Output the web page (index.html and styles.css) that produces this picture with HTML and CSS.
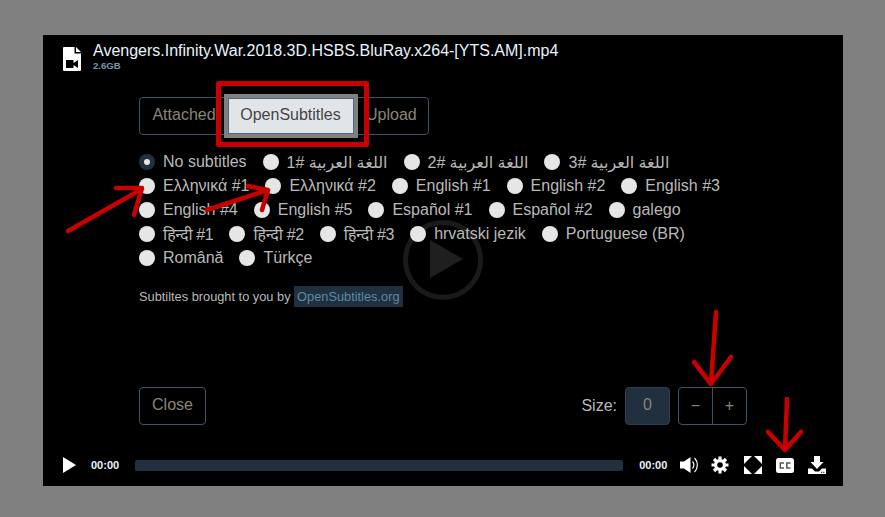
FILE: index.html
```html
<!DOCTYPE html>
<html lang="en">
<head>
  <meta charset="UTF-8" />
  <meta name="viewport" content="width=device-width, initial-scale=1.0" />
  <title>Subtitles</title>
  <link rel="stylesheet" href="styles.css">
</head>
<body>
  <div class="player">
    <div class="file-head">
      <svg class="file-icon" viewBox="0 0 18 24" width="18" height="24">
        <path fill="#fff" fill-rule="evenodd" d="M1 0h10.500v6.500H18V23a1 1 0 0 1-1 1H1a1 1 0 0 1-1-1V1a1 1 0 0 1 1-1zM13 0l5 5h-5zM3 13v8h7.500v-3l4.500 3v-8l-4.500 3v-3z"/>
      </svg>
      <div>
        <div class="file-name">Avengers.Infinity.War.2018.3D.HSBS.BluRay.x264-[YTS.AM].mp4</div>
        <div class="file-size">2.6GB</div>
      </div>
    </div>

    <div class="panel">
      <div class="tabs">
        <button class="tab">Attached</button>
        <button class="tab active">OpenSubtitles</button>
        <button class="tab">Upload</button>
      </div>

      <div class="subs">
        <label class="sub"><span class="radio checked"></span>No subtitles</label>
        <label class="sub"><span class="radio"></span><span class="ar" dir="rtl">اللغة العربية #1</span></label>
        <label class="sub"><span class="radio"></span><span class="ar" dir="rtl">اللغة العربية #2</span></label>
        <label class="sub"><span class="radio"></span><span class="ar" dir="rtl">اللغة العربية #3</span></label>
        <label class="sub"><span class="radio"></span>Ελληνικά #1</label>
        <label class="sub"><span class="radio"></span>Ελληνικά #2</label>
        <label class="sub"><span class="radio"></span>English #1</label>
        <label class="sub"><span class="radio"></span>English #2</label>
        <label class="sub"><span class="radio"></span>English #3</label>
        <label class="sub"><span class="radio"></span>English #4</label>
        <label class="sub"><span class="radio"></span>English #5</label>
        <label class="sub"><span class="radio"></span>Español #1</label>
        <label class="sub"><span class="radio"></span>Español #2</label>
        <label class="sub"><span class="radio"></span>galego</label>
        <label class="sub"><span class="radio"></span><span class="hi">हिन्दी #1</span></label>
        <label class="sub"><span class="radio"></span><span class="hi">हिन्दी #2</span></label>
        <label class="sub"><span class="radio"></span><span class="hi">हिन्दी #3</span></label>
        <label class="sub"><span class="radio"></span>hrvatski jezik</label>
        <label class="sub"><span class="radio"></span>Portuguese (BR)</label>
        <label class="sub"><span class="radio"></span>Română</label>
        <label class="sub"><span class="radio"></span>Türkçe</label>
      </div>

      <p class="credit">Subtiltes brought to you by <a class="credit-link">OpenSubtitles.org</a></p>

      <div class="panel-foot">
        <button class="btn">Close</button>
        <div class="size-box">
          <span class="size-label">Size:</span>
          <span class="size-value">0</span>
          <div class="stepper">
            <button class="step">&minus;</button>
            <button class="step">+</button>
          </div>
        </div>
      </div>
    </div>

    <div class="controls">
      <svg class="ctl-play" viewBox="0 0 13 16" width="13" height="16"><path fill="#fff" d="M0 0l13 8-13 8z"/></svg>
      <span class="time">00:00</span>
      <div class="progress"></div>
      <span class="time">00:00</span>
      <div class="ctl-icons">
        <svg viewBox="0 0 18 18" width="18" height="18">
          <path fill="#fff" d="M0 5.500h4L10.500 1v16L4 12.500H0z"/>
          <path fill="none" stroke="#fff" stroke-width="1.200" d="M12.500 5.500a5 5 0 0 1 0 7M14.500 2a10 10 0 0 1 0 14"/>
        </svg>
        <svg class="ctl-gear" viewBox="0 0 18 18" width="18" height="18">
          <path fill="none" stroke="#fff" stroke-width="3.200" d="M9 .5v17M.5 9h17M3 3l12 12M15 3L3 15"/>
          <circle cx="9" cy="9" r="6" fill="#fff"/>
          <circle cx="9" cy="9" r="2.800" fill="#000"/>
        </svg>
        <svg viewBox="0 0 18 18" width="18" height="18">
          <path fill="#fff" d="M0 0h8L0 8zM18 0v8L10 0zM0 18v-8l8 8zM18 18h-8l8-8z"/>
        </svg>
        <svg viewBox="0 0 18 15" width="18" height="15">
          <rect width="18" height="15" rx="2.500" fill="#fff"/>
          <path fill="none" stroke="#555" stroke-width="1.500" d="M8 5H4.300v5H8M14.500 5h-3.700v5h3.700"/>
        </svg>
        <svg viewBox="0 0 18 18" width="18" height="18">
          <path fill="#fff" d="M6 0h6v6h3.500L9 13 2.500 6H6zM0 12.500h4L7 15.500h4l3-3h4V18H0z"/>
          <path fill="#333" d="M13 15.800h1.200V17H13zM15.200 15.800h1.200V17h-1.200z"/>
        </svg>
      </div>
    </div>

    <svg class="big-play" viewBox="0 0 80 80" width="80" height="80">
      <circle cx="40" cy="40" r="37.500" fill="none" stroke="#1a1a1a" stroke-width="5"/>
      <path fill="#1f1f1f" d="M27 20l33 19-33 19z"/>
    </svg>
  </div>

  <!-- red annotations drawn on top of the screenshot -->
  <svg class="notes" viewBox="0 0 885 517" width="885" height="517">
    <g fill="none" stroke="#c80000" stroke-width="4.500" stroke-linecap="round" stroke-linejoin="round">
      <rect x="218.500" y="83.500" width="148" height="61" stroke-width="5"/>
      <path d="M68 231L142 189M116 188h26l-8 27"/>
      <path d="M207 210L268 190M248 186l20 4-6 20"/>
      <path d="M716 312L711 383M694 362l17 22 20-27"/>
      <path d="M787 399L785 450M768 432l17 18 16-18"/>
    </g>
  </svg>
</body>
</html>
```

FILE: styles.css
```css
body {
  margin: 0;
  height: 517px;
  overflow: hidden;
  padding: 35px 42px 0 43px;
  box-sizing: border-box;
  background-color: #808080;
  font-family: "Liberation Sans", "DejaVu Sans", "Noto Sans", sans-serif;
}
.player {
  position: relative;
  width: 800px;
  height: 451px;
  background-color: #000;
  display: flex;
  flex-direction: column;
}
.file-head {
  display: flex;
  gap: 12px;
  padding: 7px 20px 0;
  height: 55px;
  box-sizing: border-box;
}
.file-icon {
  margin-top: 5px;
}
.file-name {
  font-size: 16px;
  line-height: 18px;
  color: #e8f4ff;
}
.file-size {
  font-size: 9.6px;
  line-height: 12px;
  font-weight: bold;
  color: #7f93a8;
}
.panel {
  position: relative;
  z-index: 1;
  flex: 1;
  margin: 7px 96px 0;
  display: flex;
  flex-direction: column;
}
.tabs {
  display: flex;
  width: 290px;
  height: 38px;
  box-sizing: border-box;
  border: 1px solid #3c5468;
  border-radius: 4px;
}
button {
  font-family: inherit;
  background: none;
  border: none;
  padding: 0;
}
.tab {
  font-size: 16px;
  color: #8a8577;
  padding: 0 12px 2px;
}
.tab.active {
  width: 126px;
  flex: none;
  padding: 0 1px 2px 0;
  margin: 0;
  color: #444;
  background-color: #e2e5e8;
  border: 1px solid #4d6a80;
  box-shadow: 0 0 0 4px #808080;
}
.tab:first-child {
  width: 88px;
  flex: none;
  padding: 0 0 2px 0;
}
.tab:last-child {
  padding: 0 0 2px 12px;
}
.subs {
  display: flex;
  flex-wrap: wrap;
  margin-top: 15px;
  column-gap: 16px;
  width: 600px;
}
.sub {
  display: flex;
  align-items: center;
  gap: 8px;
  height: 24px;
  font-size: 16px;
  color: #b9b9b9;
}
.ar {
  word-spacing: -0.2px;
}
.hi {
  letter-spacing: -0.35px;
}
.radio {
  width: 16px;
  height: 16px;
  border-radius: 50%;
  background-color: #e6e6e6;
}
.radio.checked {
  background-color: #20303f;
  position: relative;
}
.radio.checked::after {
  content: "";
  position: absolute;
  left: 5px;
  top: 5px;
  width: 6px;
  height: 6px;
  border-radius: 50%;
  background-color: #e6e6e6;
}
.credit {
  margin: 16px 0 0;
  font-size: 12.8px;
  line-height: 21px;
  color: #b9b9b9;
}
.credit-link {
  display: inline-block;
  padding: 0 3px;
  background-color: #20303f;
  color: #5b8aa8;
}
.panel-foot {
  margin-top: auto;
  margin-bottom: 29px;
  display: flex;
  justify-content: space-between;
  align-items: center;
  width: 608px;
}
.btn {
  height: 38px;
  width: 67px;
  font-size: 16px;
  color: #8a8577;
  padding-bottom: 2px;
  border: 1px solid #3c5468;
  border-radius: 4px;
}
.size-box {
  display: flex;
  align-items: center;
}
.size-label {
  font-size: 16px;
  color: #b9b9b9;
  margin-right: 8px;
}
.size-value {
  width: 45px;
  height: 38px;
  box-sizing: border-box;
  border: 1px solid #2c4050;
  border-radius: 4px;
  background-color: #20303f;
  color: #8a8577;
  font-size: 16px;
  line-height: 34px;
  text-align: center;
  margin-right: 8px;
}
.stepper {
  display: flex;
  width: 69px;
  height: 38px;
  box-sizing: border-box;
  border: 1px solid #3c5468;
  border-radius: 4px;
}
.step {
  flex: 1;
  color: #8a8577;
  font-size: 16px;
}
.step:first-child {
  border-right: 1px solid #3c5468;
}
.controls {
  display: flex;
  align-items: center;
  height: 22px;
  margin-bottom: 10px;
  padding: 0 0 0 20px;
}
.ctl-play {
  flex: none;
  margin-right: 15px;
}
.time {
  flex: none;
  font-size: 11px;
  font-weight: bold;
  color: #e8f4ff;
}
.progress {
  flex: none;
  width: 488px;
  height: 11px;
  margin: 0 16px;
  border-radius: 2px;
  background-color: #20303f;
}
.ctl-icons {
  display: flex;
  align-items: center;
  gap: 14px;
  margin-left: 13px;
}
.ctl-gear {
  margin: 0 1px 0 -1px;
}
.big-play {
  position: absolute;
  left: 360px;
  top: 185px;
}
.notes {
  position: absolute;
  left: 0;
  top: 0;
  z-index: 2;
}
```
